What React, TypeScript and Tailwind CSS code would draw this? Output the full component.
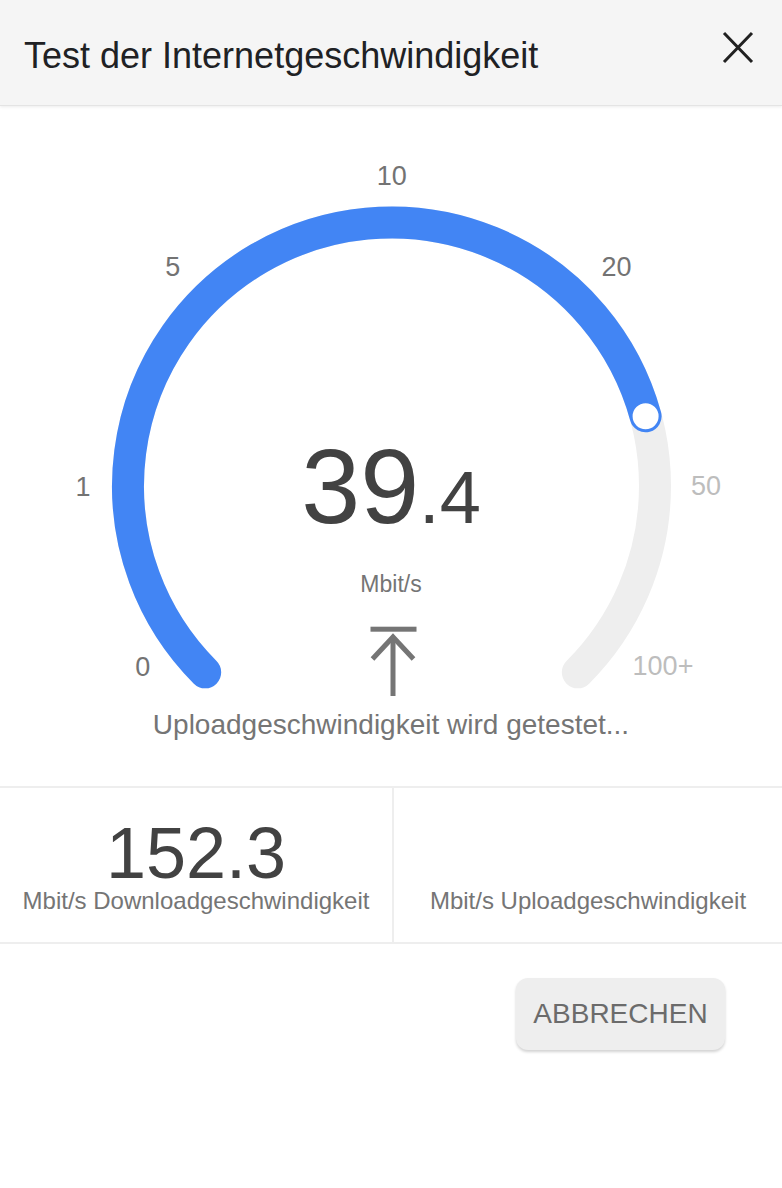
const BLUE = "#4285f4";
const TRACK = "#eeeeee";

// gauge geometry, in svg coords (svg top sits under the header)
const CX = 391.5;
const CY = 380;
const R = 263.5;
const START = 225;
const END = -45;
const VALUE_ANGLE = 15.35; // 39.4 Mbit/s on the log-ish scale

function polar(deg: number, r = R) {
  const a = (deg * Math.PI) / 180;
  return [CX + r * Math.cos(a), CY - r * Math.sin(a)];
}

function arcPath(from: number, to: number) {
  const [x1, y1] = polar(from);
  const [x2, y2] = polar(to);
  const large = from - to > 180 ? 1 : 0;
  return `M ${x1} ${y1} A ${R} ${R} 0 ${large} 1 ${x2} ${y2}`;
}

const ticks = [
  { label: "0", x: 142.7, y: 560.7, active: true },
  { label: "1", x: 83, y: 381, active: true },
  { label: "5", x: 172.7, y: 160.7, active: true },
  { label: "10", x: 391.7, y: 70.3, active: true },
  { label: "20", x: 616.6, y: 160.7, active: true },
  { label: "50", x: 706, y: 380, active: false },
  { label: "100+", x: 663, y: 560, active: false },
];

function Gauge() {
  const [kx, ky] = polar(VALUE_ANGLE);
  return (
    <svg width={782} height={594} viewBox="0 0 782 594" className="block">
      <path d={arcPath(START, END)} fill="none" stroke={TRACK} strokeWidth={32} strokeLinecap="round" />
      <path d={arcPath(START, VALUE_ANGLE)} fill="none" stroke={BLUE} strokeWidth={32} strokeLinecap="round" />
      <circle cx={kx} cy={ky} r={14} fill="#fff" stroke={BLUE} strokeWidth={2} />
      {ticks.map((t) => (
        <text
          key={t.label}
          x={t.x}
          y={t.y}
          textAnchor="middle"
          dominantBaseline="central"
          fontSize={27}
          fill={t.active ? "#737373" : "#bdbdbd"}
        >
          {t.label}
        </text>
      ))}
    </svg>
  );
}

function UploadArrow() {
  return (
    <svg width={48} height={70} viewBox="0 0 48 70" className="block">
      <rect x={1.5} y={0.7} width={46} height={5} fill="#757575" />
      <path d="M24 12 V70" stroke="#757575" strokeWidth={5} fill="none" />
      <path d="M3.5 33 L24 11 L44.5 33" stroke="#757575" strokeWidth={5} fill="none" />
    </svg>
  );
}

function CloseIcon() {
  return (
    <svg width={32} height={33} viewBox="0 0 32 33" className="block">
      <path d="M2 2 L30 31 M30 2 L2 31" stroke="#212121" strokeWidth={3} fill="none" />
    </svg>
  );
}

function StatCell({ value, label, divider }: { value?: string; label: string; divider?: boolean }) {
  return (
    <div className={`flex flex-col items-center pt-[34px] ${divider ? "border-r-2 border-[#eeeeee]" : ""}`}>
      <div className="h-[62px] text-[72px] leading-[62px] text-[#424242]">{value}</div>
      <div className="mt-[5px] text-[24px] leading-none text-[#757575] whitespace-nowrap">{label}</div>
    </div>
  );
}

export default function App() {
  return (
    <div className="w-[782px] bg-white font-['Liberation_Sans',Arial,Helvetica,sans-serif]">
      {/* Header */}
      <div className="flex h-[106px] items-start justify-between border-b border-[#e4e4e4] bg-[#f5f5f5] pl-6 pr-[28px] shadow-[0_1px_3px_rgba(0,0,0,0.08)]">
        <h1 className="mt-[38px] text-[36px] leading-none text-[#202124]">Test der Internetgeschwindigkeit</h1>
        <div className="mt-[31px]">
          <CloseIcon />
        </div>
      </div>

      {/* Gauge */}
      <div className="flex h-[680px] flex-col items-center">
        <div className="relative">
          <Gauge />
          <div className="absolute left-0 right-0 top-[327px] flex flex-col items-center">
            <div className="flex items-baseline text-[#424242]">
              <span className="text-[106px] leading-none">39</span>
              <span className="text-[74px] leading-none">.4</span>
            </div>
            <div className="mt-[34px] text-[23px] leading-none text-[#757575]">Mbit/s</div>
            <div className="mt-[30px] pl-[3px]">
              <UploadArrow />
            </div>
          </div>
        </div>
        <p className="mt-[11px] text-[28px] leading-none text-[#757575]">Uploadgeschwindigkeit wird getestet...</p>
      </div>

      {/* Results */}
      <div className="grid h-[158px] grid-cols-[394px_1fr] border-y-2 border-[#eeeeee]">
        <StatCell value="152.3" label="Mbit/s Downloadgeschwindigkeit" divider />
        <StatCell label="Mbit/s Uploadgeschwindigkeit" />
      </div>

      {/* Actions */}
      <div className="flex justify-end pr-[57px] pt-[34px] pb-[40px]">
        <button className="flex h-[72px] w-[209px] items-center justify-center rounded-[12px] bg-[#eeeeee] text-[28px] leading-none text-[#6b6b6b] shadow-[0_2px_3px_rgba(0,0,0,0.18)]">
          ABBRECHEN
        </button>
      </div>
    </div>
  );
}
